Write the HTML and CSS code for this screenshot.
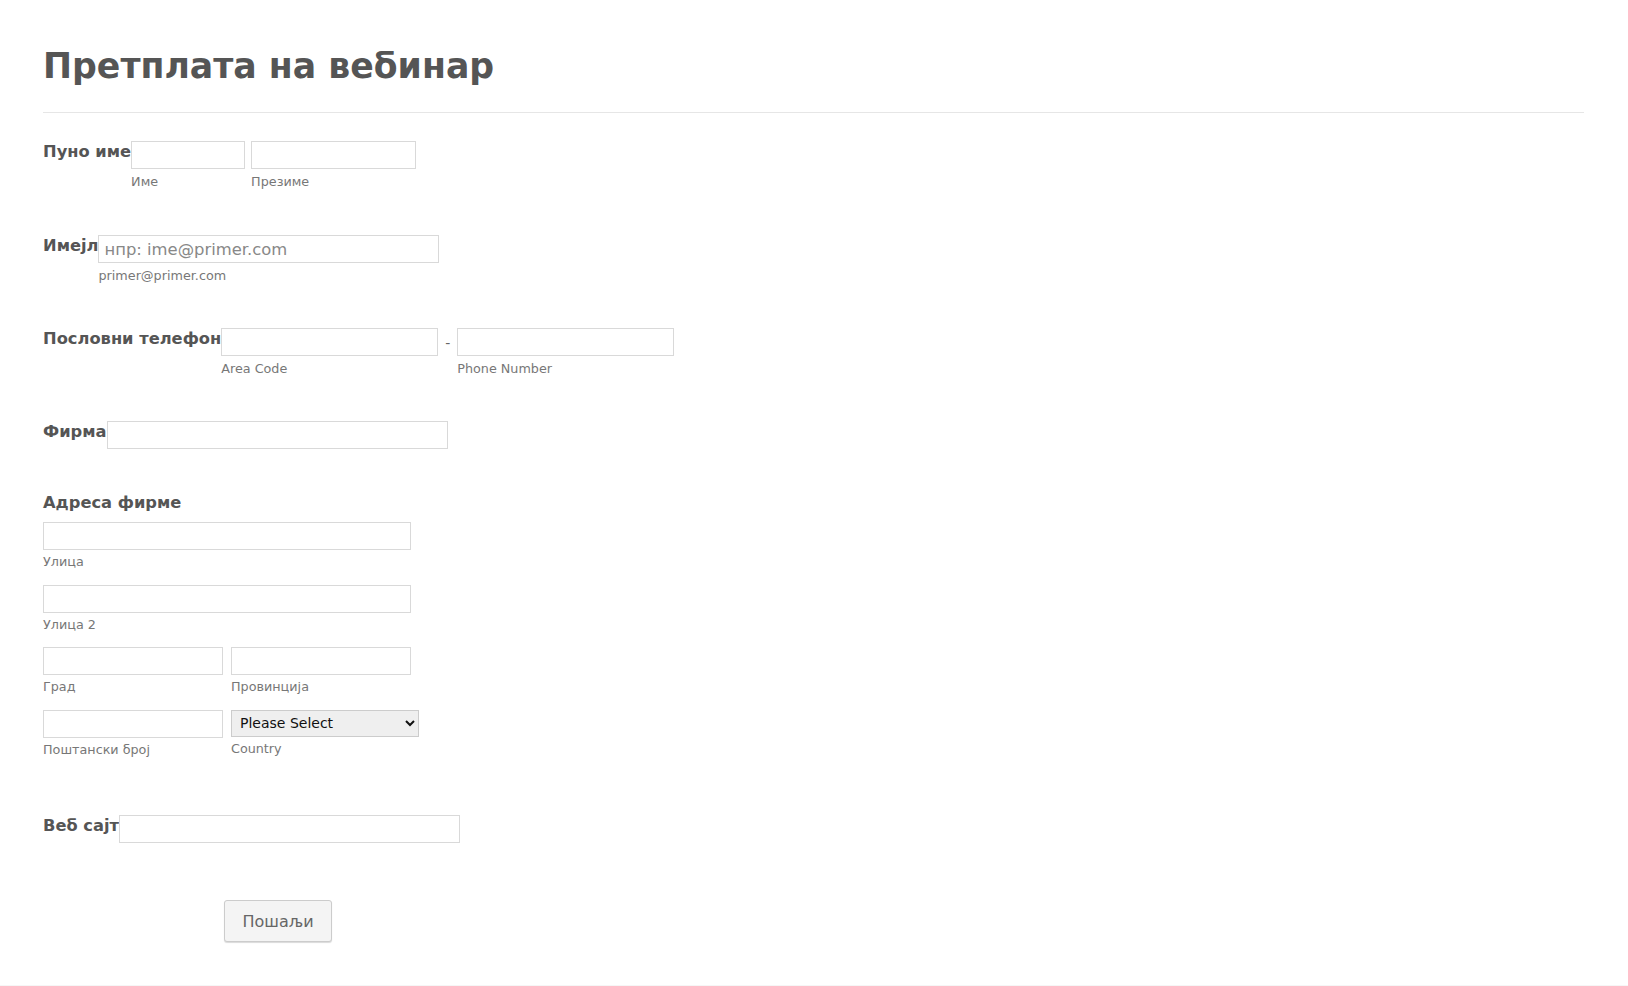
FILE: index.html
```html
<!DOCTYPE html>
<html lang="sr">
<head>
    <meta charset="UTF-8">
    <title>Претплата на вебинар</title>
    <link rel="stylesheet" href="styles.css">
</head>
<body>

    <form class="form-all">
        <div class="form-header">
            <h1>Претплата на вебинар</h1>
        </div>

        <div class="form-line line-name">
            <label class="form-label">Пуно име</label>
            <div class="field">
                <input class="w-first" type="text">
                <span class="sublabel">Име</span>
            </div>
            <div class="field">
                <input class="w-last" type="text">
                <span class="sublabel">Презиме</span>
            </div>
        </div>

        <div class="form-line line-email">
            <label class="form-label">Имејл</label>
            <div class="field">
                <input class="w-wide" type="email" placeholder="нпр: ime@primer.com">
                <span class="sublabel">primer@primer.com</span>
            </div>
        </div>

        <div class="form-line line-phone">
            <label class="form-label">Пословни телефон</label>
            <div class="field">
                <input class="w-phone" type="tel">
                <span class="sublabel">Area Code</span>
            </div>
            <span class="dash">-</span>
            <div class="field">
                <input class="w-phone" type="tel">
                <span class="sublabel">Phone Number</span>
            </div>
        </div>

        <div class="form-line line-company">
            <label class="form-label">Фирма</label>
            <input class="w-wide" type="text">
        </div>

        <div class="address">
            <label class="form-label">Адреса фирме</label>
            <div class="addr-row">
                <div class="field">
                    <input class="w-street" type="text">
                    <span class="sublabel">Улица</span>
                </div>
            </div>
            <div class="addr-row">
                <div class="field">
                    <input class="w-street" type="text">
                    <span class="sublabel">Улица 2</span>
                </div>
            </div>
            <div class="addr-row">
                <div class="field">
                    <input class="w-half" type="text">
                    <span class="sublabel">Град</span>
                </div>
                <div class="field">
                    <input class="w-half" type="text">
                    <span class="sublabel">Провинција</span>
                </div>
            </div>
            <div class="addr-row">
                <div class="field">
                    <input class="w-half" type="text">
                    <span class="sublabel">Поштански број</span>
                </div>
                <div class="field">
                    <select class="country">
                        <option>Please Select</option>
                        <option>Serbia</option>
                    </select>
                    <span class="sublabel">Country</span>
                </div>
            </div>
        </div>

        <div class="form-line line-website">
            <label class="form-label">Веб сајт</label>
            <input class="w-wide" type="text">
        </div>

        <div class="buttons">
            <button type="button" class="submit">Пошаљи</button>
        </div>
    </form>

</body>
</html>
```

FILE: styles.css
```css
body {
    margin: 0;
    background: #fff;
    font-family: "DejaVu Sans", Verdana, sans-serif;
    color: #555;
}

.form-all {
    padding: 0 44px 43px 43px;
    border-bottom: 1px solid #f6f6f6;
}

.form-header {
    padding: 46px 0 26px;
    border-bottom: 1px solid #e6e6e6;
}

h1 {
    margin: 0;
    font-size: 34.7px;
    line-height: 40px;
    font-weight: bold;
    color: #555;
}

.form-line {
    display: flex;
    align-items: flex-start;
    margin-bottom: 45px;
}

.line-name {
    margin-top: 28px;
}

.line-email {
    margin-bottom: 44px;
}

.line-phone {
    margin-bottom: 43.5px;
}

.line-company {
    margin-bottom: 43px;
}

.form-label {
    font-size: 16.3px;
    line-height: 22px;
    font-weight: bold;
    color: #555;
}

.field {
    display: flex;
    flex-direction: column;
}

.field + .field {
    margin-left: 6px;
}

input {
    box-sizing: border-box;
    height: 28px;
    margin: 0;
    padding: 0 5px;
    border: 1px solid #d9d9d9;
    background: #fff;
    font-family: "DejaVu Sans", Verdana, sans-serif;
    font-size: 16.4px;
    color: #555;
}

input::placeholder {
    color: #888;
}

.sublabel {
    margin-top: 5px;
    font-size: 12.75px;
    line-height: 16px;
    color: #777;
}

.addr-row .sublabel {
    margin-top: 4px;
}

.w-first { width: 114px; }
.w-last { width: 165px; }
.w-wide { width: 341px; }
.w-phone { width: 217px; }
.w-street { width: 368px; }
.w-half { width: 180px; }

.dash {
    width: 19px;
    text-align: center;
    font-size: 14px;
    line-height: 30px;
    color: #666;
}

.address .form-label {
    display: block;
    margin-bottom: 8.5px;
}

.addr-row {
    display: flex;
    margin-bottom: 14.5px;
}

.addr-row .field + .field {
    margin-left: 8px;
}

.addr-row:last-child {
    margin-bottom: 0;
}

.country {
    box-sizing: border-box;
    width: 188px;
    height: 27px;
    margin: 0;
    padding: 0 4px;
    border: 1px solid #ccc;
    background: #efefef;
    font-family: "DejaVu Sans", Verdana, sans-serif;
    font-size: 14px;
    color: #111;
}

.line-website {
    margin-top: 57.5px;
    margin-bottom: 57px;
}

.buttons {
    padding-left: 181px;
}

.submit {
    width: 108px;
    height: 42px;
    border: 1px solid #ccc;
    border-radius: 3px;
    background: #f4f4f4;
    box-shadow: 0 1px 1px rgba(0, 0, 0, 0.15);
    font-family: "DejaVu Sans", Verdana, sans-serif;
    font-size: 16px;
    color: #666;
}
```
